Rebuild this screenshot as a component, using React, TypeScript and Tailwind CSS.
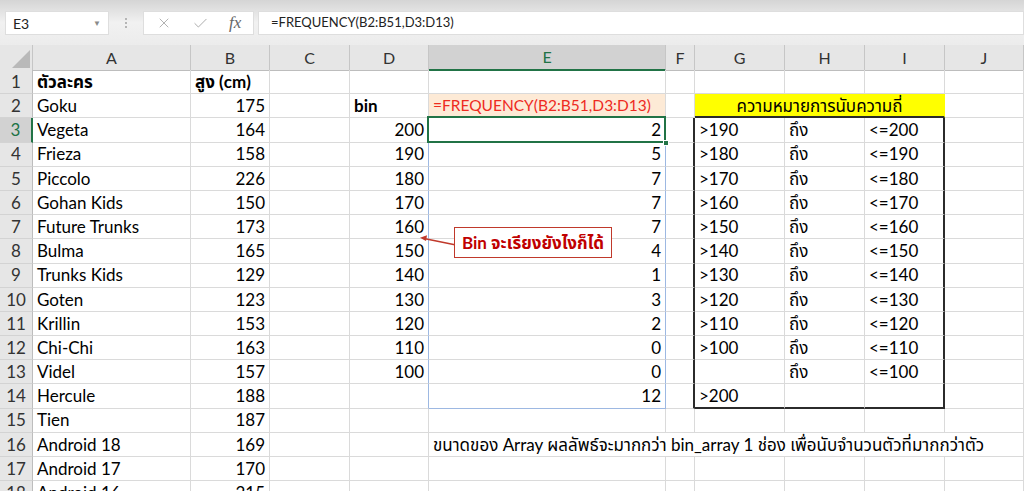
import { X, Check } from "lucide-react";
import clsx from "clsx";

type Row = { a: string; b: string; d?: string; e?: string; g?: string; h?: string; i?: string };

const rows: Row[] = [
  { a: "ตัวละคร", b: "สูง (cm)" },
  { a: "Goku", b: "175", d: "bin", e: "=FREQUENCY(B2:B51,D3:D13)", g: "ความหมายการนับความถี่" },
  { a: "Vegeta", b: "164", d: "200", e: "2", g: ">190", h: "ถึง", i: "<=200" },
  { a: "Frieza", b: "158", d: "190", e: "5", g: ">180", h: "ถึง", i: "<=190" },
  { a: "Piccolo", b: "226", d: "180", e: "7", g: ">170", h: "ถึง", i: "<=180" },
  { a: "Gohan Kids", b: "150", d: "170", e: "7", g: ">160", h: "ถึง", i: "<=170" },
  { a: "Future Trunks", b: "173", d: "160", e: "7", g: ">150", h: "ถึง", i: "<=160" },
  { a: "Bulma", b: "165", d: "150", e: "4", g: ">140", h: "ถึง", i: "<=150" },
  { a: "Trunks Kids", b: "129", d: "140", e: "1", g: ">130", h: "ถึง", i: "<=140" },
  { a: "Goten", b: "123", d: "130", e: "3", g: ">120", h: "ถึง", i: "<=130" },
  { a: "Krillin", b: "153", d: "120", e: "2", g: ">110", h: "ถึง", i: "<=120" },
  { a: "Chi-Chi", b: "163", d: "110", e: "0", g: ">100", h: "ถึง", i: "<=110" },
  { a: "Videl", b: "157", d: "100", e: "0", g: "", h: "ถึง", i: "<=100" },
  { a: "Hercule", b: "188", e: "12", g: ">200" },
  { a: "Tien", b: "187" },
  { a: "Android 18", b: "169", e: "ขนาดของ Array ผลลัพธ์จะมากกว่า bin_array 1 ช่อง เพื่อนับจำนวนตัวที่มากกว่าตัว" },
  { a: "Android 17", b: "170" },
  { a: "Android 16", b: "215" },
];

const cols = "grid grid-cols-[33px_158px_79px_80px_79px_237px_29px_90px_80px_80px_1fr]";
const base = "flex items-center overflow-hidden whitespace-nowrap px-[4px]";
const gR = "border-r border-r-[#dadada]";
const gB = "border-b border-b-[#dadada]";
const blueR = "border-r border-r-[#9db8e2]";
const blackR = "border-r-2 border-r-[#2b2b2b]";
const blackB = "border-b-2 border-b-[#2b2b2b]";

const letters = ["A", "B", "C", "D", "E", "F", "G", "H", "I", "J"];

const Toolbar = () => (
  <div className="h-[45px] bg-gradient-to-b from-[#d5d5d5] via-[#f1f1f1] to-[#ececec] flex items-start pt-[11px] pl-[5px]">
    <div className="w-[104px] h-[24px] bg-white border border-[#dedede] flex items-center justify-between px-[7px] text-[14px] text-[#222]">
      <span>E3</span>
      <span className="text-[8px] text-[#8a8a8a]">▼</span>
    </div>
    <div className="w-[34px] h-[24px] flex flex-col items-center justify-center gap-[2px]">
      <span className="w-[2px] h-[2px] bg-[#b5b5b5]" />
      <span className="w-[2px] h-[2px] bg-[#b5b5b5]" />
      <span className="w-[2px] h-[2px] bg-[#b5b5b5]" />
    </div>
    <div className="w-[111px] h-[24px] bg-white border border-[#dedede] flex items-center pl-[12px] gap-[20px] text-[#a6a6a6]">
      <X className="w-[16px] h-[16px]" strokeWidth={1.3} />
      <Check className="w-[17px] h-[17px]" strokeWidth={1.3} />
      <span className="font-['Liberation_Serif',serif] italic text-[17px] text-[#666]">fx</span>
    </div>
    <div className="ml-[4px] flex-1 h-[24px] bg-white border border-[#dedede] flex items-center pl-[12px] text-[13px] text-[#222]">
      =FREQUENCY(B2:B51,D3:D13)
    </div>
  </div>
);

const Header = () => (
  <div className={clsx(cols, "h-[25px]")}>
    <div className="bg-[#e6e6e6] border-r border-b border-r-[#c6c6c6] border-b-[#bdbdbd] flex items-end justify-end p-[2px]">
      <svg width="18" height="18" viewBox="0 0 18 18">
        <polygon points="18,0 18,18 0,18" fill="#b9b9b9" />
      </svg>
    </div>
    {letters.map((l) => (
      <div
        key={l}
        className={clsx(
          "flex items-center justify-center text-[16px] border-r border-r-[#c6c6c6]",
          l === "E"
            ? "bg-[#d2d2d2] text-[#217346] border-b-2 border-b-[#217346]"
            : "bg-[#e6e6e6] text-[#333] border-b border-b-[#bdbdbd]"
        )}
      >
        {l}
      </div>
    ))}
  </div>
);

const renderRow = (r: Row, idx: number) => {
  const n = idx + 1;
  const inRange = n >= 4 && n <= 14;
  const inBox = n >= 3 && n <= 14;
  const cells = [];

  cells.push(
    <div
      key={`h${n}`}
      className={clsx(
        "flex items-center justify-center text-[17px] border-b border-b-[#d3d3d3]",
        n === 3
          ? "bg-[#d2d2d2] text-[#217346] border-r-2 border-r-[#217346]"
          : "bg-[#e6e6e6] text-[#333] border-r border-r-[#bdbdbd]"
      )}
    >
      {n}
    </div>
  );

  cells.push(
    <div key={`a${n}`} className={clsx(base, "text-[17px]", gR, gB, n === 1 && "font-bold")}>
      {r.a}
    </div>
  );
  cells.push(
    <div key={`b${n}`} className={clsx(base, "text-[17px]", gR, gB, n === 1 ? "font-bold" : "justify-end")}>
      {r.b}
    </div>
  );
  cells.push(<div key={`c${n}`} className={clsx(base, gR, gB)} />);
  cells.push(
    <div
      key={`d${n}`}
      className={clsx(base, "text-[17px]", gB, inRange ? blueR : gR, n === 2 ? "font-bold" : "justify-end")}
    >
      {r.d}
    </div>
  );

  if (n === 16) {
    cells.push(
      <div key={`e${n}`} className={clsx(base, "text-[17px] col-span-6", gR, gB)}>
        {r.e}
      </div>
    );
    return cells;
  }

  if (n === 2) {
    cells.push(
      <div key={`e${n}`} className={clsx(base, "text-[15.5px] bg-[#fdead6] text-[#ee2b1f]", gR, gB)}>
        {r.e}
      </div>
    );
  } else if (n === 3) {
    cells.push(
      <div key={`e${n}`} className={clsx(base, "text-[17px] justify-end relative overflow-visible", gR, gB)}>
        {r.e}
        <div className="absolute -left-[2px] -top-[2px] -right-[1px] -bottom-[1px] border-2 border-[#217346]" />
        <div className="absolute -right-[4px] -bottom-[4px] w-[6px] h-[6px] bg-[#217346] border border-white" />
      </div>
    );
  } else {
    cells.push(
      <div
        key={`e${n}`}
        className={clsx(
          base,
          "text-[17px] justify-end",
          inRange ? blueR : gR,
          n === 14 ? "border-b border-b-[#9db8e2]" : gB
        )}
      >
        {r.e}
      </div>
    );
  }

  cells.push(<div key={`f${n}`} className={clsx(base, gB, inBox ? blackR : gR)} />);

  if (n === 2) {
    cells.push(
      <div
        key={`g${n}`}
        className={clsx(base, "text-[17px] col-span-3 justify-center bg-[#ffff00] border-r border-r-[#ffff00]", blackB)}
      >
        {r.g}
      </div>
    );
  } else {
    const bottom = n === 14 ? blackB : gB;
    cells.push(
      <div key={`g${n}`} className={clsx(base, "text-[17px]", gR, bottom)}>
        {r.g}
      </div>
    );
    cells.push(
      <div key={`hh${n}`} className={clsx(base, "text-[17px]", gR, bottom)}>
        {r.h}
      </div>
    );
    cells.push(
      <div key={`i${n}`} className={clsx(base, "text-[17px]", bottom, inBox ? blackR : gR)}>
        {r.i}
      </div>
    );
  }

  cells.push(<div key={`j${n}`} className={clsx(base, gR, gB)} />);
  return cells;
};

export default function App() {
  return (
    <div className="relative w-[1024px] h-[491px] overflow-hidden bg-white text-black font-['Lato','Noto_Sans_Thai','Noto_Sans',sans-serif]">
      <Toolbar />
      <Header />
      <div className={clsx(cols, "auto-rows-[24.2px]")}>{rows.map(renderRow)}</div>

      {/* callout */}
      <svg className="absolute left-[416px] top-[230px]" width="42" height="20" viewBox="0 0 42 20">
        <line x1="40" y1="15" x2="8" y2="8.5" stroke="#c0392b" strokeWidth="1.5" />
        <polygon points="4,7.7 11,5.2 10,11" fill="#c0392b" />
      </svg>
      <div className="absolute left-[454px] top-[227px] w-[158px] h-[31px] bg-white border-[1.5px] border-[#c0392b] flex items-center justify-center text-[17px] font-bold text-[#c00000]">
        Bin จะเรียงยังไงก็ได้
      </div>
    </div>
  );
}
